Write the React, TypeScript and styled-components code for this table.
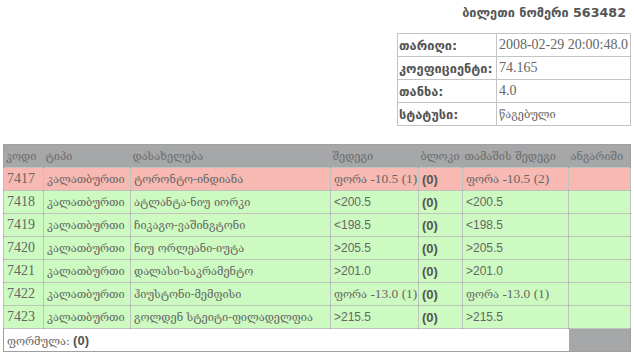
import styled, { createGlobalStyle } from "styled-components";

const GlobalStyle = createGlobalStyle`
	body {
		margin: 0;
		background: #ffffff;
		font-family: "Liberation Serif", "DejaVu Serif", serif;
		color: #5e5e5e;
	}
`;

type Bet = {
	code: string;
	type: string;
	name: string;
	result: string;
	block: string;
	gameResult: string;
	lost?: boolean;
};

const bets: Bet[] = [
	{ code: "7417", type: "კალათბურთი", name: "ტორონტო-ინდიანა", result: "ფორა -10.5 (1)", block: "(0)", gameResult: "ფორა -10.5 (2)", lost: true },
	{ code: "7418", type: "კალათბურთი", name: "ატლანტა-ნიუ იორკი", result: "<200.5", block: "(0)", gameResult: "<200.5" },
	{ code: "7419", type: "კალათბურთი", name: "ჩიკაგო-ვაშინგტონი", result: "<198.5", block: "(0)", gameResult: "<198.5" },
	{ code: "7420", type: "კალათბურთი", name: "ნიუ ორლეანი-იუტა", result: ">205.5", block: "(0)", gameResult: ">205.5" },
	{ code: "7421", type: "კალათბურთი", name: "დალასი-საკრამენტო", result: ">201.0", block: "(0)", gameResult: ">201.0" },
	{ code: "7422", type: "კალათბურთი", name: "ჰიუსტონი-მემფისი", result: "ფორა -13.0 (1)", block: "(0)", gameResult: "ფორა -13.0 (1)" },
	{ code: "7423", type: "კალათბურთი", name: "გოლდენ სტეიტი-ფილადელფია", result: ">215.5", block: "(0)", gameResult: ">215.5" },
];

const info = [
	{ label: "თარიღი:", value: "2008-02-29 20:00:48.0" },
	{ label: "კოეფიციენტი:", value: "74.165" },
	{ label: "თანხა:", value: "4.0" },
	{ label: "სტატუსი:", value: "წაგებული" },
];

const isSans = (s: string) => /^[<>]/.test(s);

// Georgian letters are set smaller than the Latin digits, as in the original page
const Mixed = ({ text }: { text: string }) => (
	<>
		{text.split(/([\u10A0-\u10FF]+)/).map((part, i) =>
			/[\u10A0-\u10FF]/.test(part) ? <Geo key={i}>{part}</Geo> : part
		)}
	</>
);

export default function App() {
	return (
		<Page>
			<GlobalStyle />
			<Title>ბილეთი ნომერი 563482</Title>
			<InfoTable>
				<tbody>
					{info.map((row) => (
						<tr key={row.label}>
							<InfoLabel>{row.label}</InfoLabel>
							<InfoValue>
								<Mixed text={row.value} />
							</InfoValue>
						</tr>
					))}
				</tbody>
			</InfoTable>
			<BetTable>
				<colgroup>
					<col style={{ width: 40 }} />
					<col style={{ width: 87 }} />
					<col style={{ width: 200 }} />
					<col style={{ width: 88 }} />
					<col style={{ width: 44 }} />
					<col style={{ width: 106 }} />
					<col />
				</colgroup>
				<thead>
					<tr>
						<HeadCell>კოდი</HeadCell>
						<HeadCell>ტიპი</HeadCell>
						<HeadCell>დასახელება</HeadCell>
						<HeadCell>შედეგი</HeadCell>
						<HeadCell>ბლოკი</HeadCell>
						<HeadCell>თამაშის შედეგი</HeadCell>
						<HeadCell>ანგარიში</HeadCell>
					</tr>
				</thead>
				<tbody>
					{bets.map((b) => (
						<BetRow key={b.code} $lost={b.lost}>
							<Cell>{b.code}</Cell>
							<Cell>
								<Geo>{b.type}</Geo>
							</Cell>
							<Cell>
								<Geo>{b.name}</Geo>
							</Cell>
							<ResultCell $sans={isSans(b.result)}>
								<Mixed text={b.result} />
							</ResultCell>
							<BlockCell>{b.block}</BlockCell>
							<ResultCell $sans={isSans(b.gameResult)}>
								<Mixed text={b.gameResult} />
							</ResultCell>
							<Cell />
						</BetRow>
					))}
					<FooterRow>
						<FormulaCell colSpan={6}>
							ფორმულა: <Bold>(0)</Bold>
						</FormulaCell>
						<EmptyGrey />
					</FooterRow>
				</tbody>
			</BetTable>
		</Page>
	);
}

const Page = styled.div`
	display: flex;
	flex-direction: column;
	padding: 0 3px;
	width: 634px;
	box-sizing: border-box;
`;

const Title = styled.div`
	align-self: flex-end;
	margin: 3px 5px 0 0;
	height: 19px;
	font-family: "DejaVu Sans", sans-serif;
	font-weight: bold;
	font-size: 12.7px;
	line-height: 19px;
	color: #555555;
`;

const InfoTable = styled.table`
	align-self: flex-end;
	margin-top: 11px;
	width: 234px;
	border-collapse: collapse;
	border: 1px solid #a8a8a8;
	font-size: 14px;
`;

const InfoLabel = styled.td`
	width: 100px;
	height: 22px;
	padding: 0 1px;
	border: 1px solid #c4c4c4;
	font-family: "DejaVu Sans", sans-serif;
	font-weight: bold;
	font-size: 12.8px;
	white-space: nowrap;
	color: #555555;
`;

const InfoValue = styled.td`
	height: 22px;
	padding: 0 2px;
	border: 1px solid #c4c4c4;
	font-family: "Liberation Serif", "DejaVu Serif", serif;
	font-size: 14px;
	white-space: nowrap;
	color: #666666;
`;

const Geo = styled.span`
	font-family: "DejaVu Serif", serif;
	font-size: 11px;
`;

const BetTable = styled.table`
	margin-top: 18px;
	width: 628px;
	table-layout: fixed;
	border-collapse: collapse;
	border: 1px solid #a0a0a0;
`;

const HeadCell = styled.th`
	height: 22px;
	padding: 0 2px;
	background: #a6a7a9;
	text-align: left;
	font-weight: normal;
	font-family: "DejaVu Serif", serif;
	font-size: 11px;
	color: #6c6c6c;
	white-space: nowrap;
	overflow: hidden;
`;

const BetRow = styled.tr<{ $lost?: boolean }>`
	background: ${(p) => (p.$lost ? "#f8b9b3" : "#cdfac0")};
`;

const Cell = styled.td<{ $sans?: boolean }>`
	height: 22px;
	padding: 0 3px;
	border: 1px solid rgba(40, 60, 40, 0.3);
	font-family: ${(p) =>
		p.$sans ? `"Liberation Sans", sans-serif` : `"Liberation Serif", "DejaVu Serif", serif`};
	font-size: ${(p) => (p.$sans ? "12px" : "14px")};
	color: #666666;
	white-space: nowrap;
	overflow: hidden;
`;

const ResultCell = styled(Cell)`
	padding: 0 2px 0 3px;
	font-size: ${(p) => (p.$sans ? "12px" : "13.4px")};
`;

const BlockCell = styled(Cell)`
	font-family: "Liberation Sans", sans-serif;
	font-weight: bold;
	font-size: 13px;
	color: #555555;
`;

const FooterRow = styled.tr`
	background: #ffffff;
`;

const FormulaCell = styled.td`
	height: 22px;
	padding: 0 3px;
	border-top: 1px solid #a0a0a0;
	font-family: "DejaVu Serif", serif;
	font-size: 11px;
	color: #666666;
`;

const Bold = styled.span`
	font-family: "Liberation Sans", sans-serif;
	font-weight: bold;
	font-size: 13px;
	color: #555555;
`;

const EmptyGrey = styled.td`
	background: #a6a7a9;
	border-top: 1px solid #a0a0a0;
`;
